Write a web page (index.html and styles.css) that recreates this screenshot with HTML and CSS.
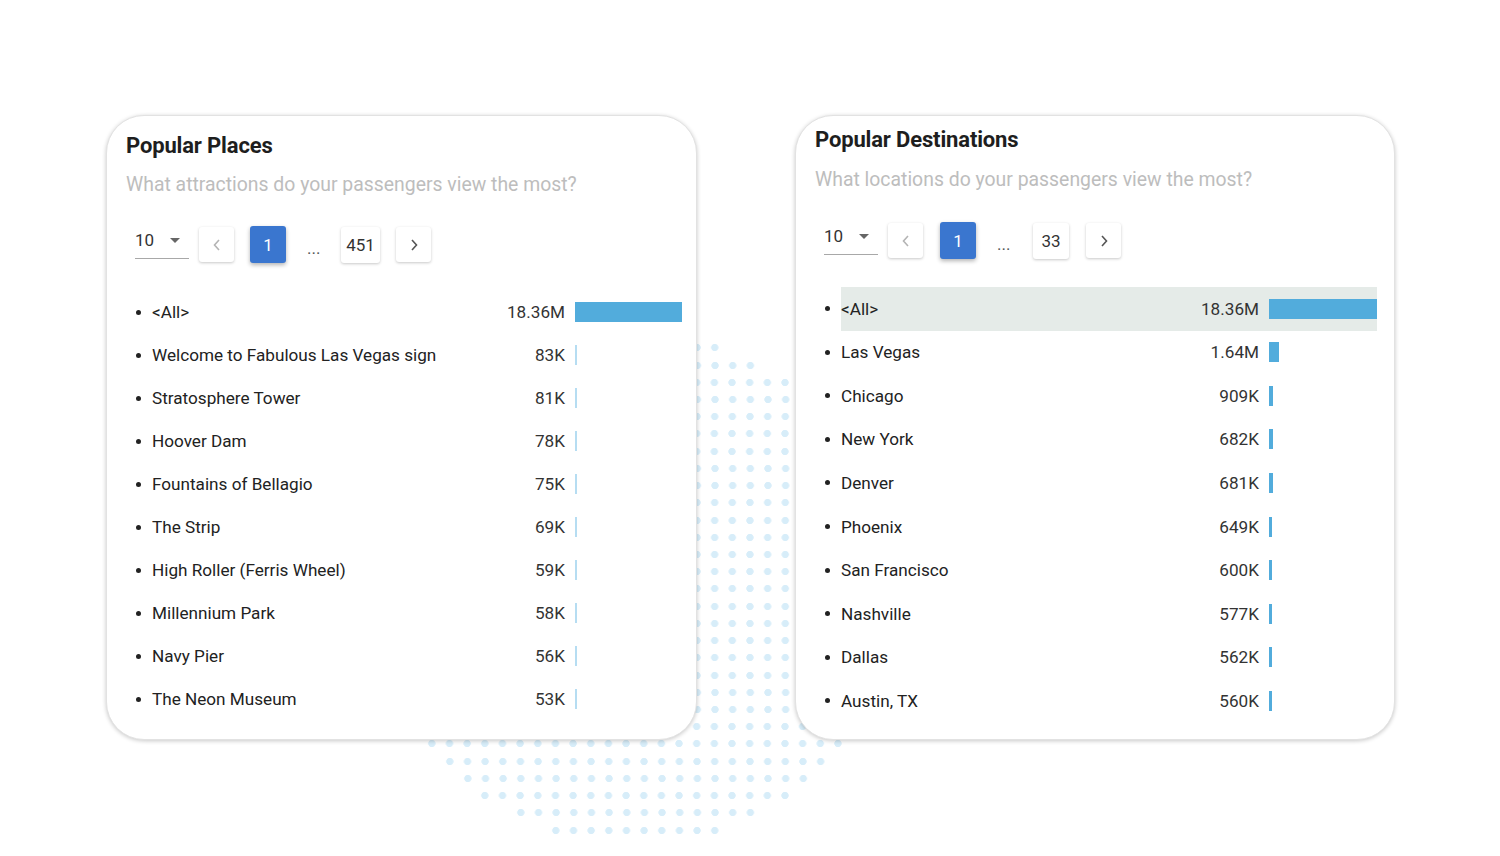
FILE: index.html
```html
<!DOCTYPE html>
<html>
<head>
<meta charset="utf-8">
<link rel="stylesheet" href="styles.css">
</head>
<body>
<div class="dots" aria-hidden="true">
  <div class="dr w10"></div><div class="dr w14"></div><div class="dr w18"></div><div class="dr w20"></div>
  <div class="dr w22"></div><div class="dr w24"></div><div class="dr w24"></div><div class="dr w26"></div>
  <div class="dr w26"></div><div class="dr w28"></div><div class="dr w28"></div><div class="dr w28"></div>
  <div class="dr w28"></div><div class="dr w28"></div><div class="dr w28"></div><div class="dr w28"></div>
  <div class="dr w28"></div><div class="dr w28"></div><div class="dr w28"></div><div class="dr w28"></div>
  <div class="dr w26"></div><div class="dr w26"></div><div class="dr w24"></div><div class="dr w24"></div>
  <div class="dr w22"></div><div class="dr w20"></div><div class="dr w18"></div><div class="dr w14"></div>
  <div class="dr w10"></div>
</div>

<main class="cards">
  <section class="card card-places">
    <h2 class="title">Popular Places</h2>
    <p class="sub">What attractions do your passengers view the most?</p>
    <div class="pager">
      <div class="select"><span>10</span><svg width="10" height="5" viewBox="0 0 10 5"><polygon points="0,0 10,0 5,5" fill="#666"/></svg></div>
      <button class="pbtn prev"><svg width="10" height="14" viewBox="0 0 10 14"><path d="M7 2 L2.5 7 L7 12" fill="none" stroke="#b4b4b4" stroke-width="1.6"/></svg></button>
      <button class="pbtn active">1</button>
      <span class="ellipsis">...</span>
      <button class="pbtn num">451</button>
      <button class="pbtn next"><svg width="10" height="14" viewBox="0 0 10 14"><path d="M3 2 L7.5 7 L3 12" fill="none" stroke="#555" stroke-width="1.6"/></svg></button>
    </div>
    <ul class="list">
      <li><span class="bullet"></span><div class="body"><span class="name">&lt;All&gt;</span><span class="val">18.36M</span><span class="bar-wrap"><span class="bar" style="width:107px"></span></span></div></li>
      <li><span class="bullet"></span><div class="body"><span class="name">Welcome to Fabulous Las Vegas sign</span><span class="val">83K</span><span class="bar-wrap"><span class="bar thin"></span></span></div></li>
      <li><span class="bullet"></span><div class="body"><span class="name">Stratosphere Tower</span><span class="val">81K</span><span class="bar-wrap"><span class="bar thin"></span></span></div></li>
      <li><span class="bullet"></span><div class="body"><span class="name">Hoover Dam</span><span class="val">78K</span><span class="bar-wrap"><span class="bar thin"></span></span></div></li>
      <li><span class="bullet"></span><div class="body"><span class="name">Fountains of Bellagio</span><span class="val">75K</span><span class="bar-wrap"><span class="bar thin"></span></span></div></li>
      <li><span class="bullet"></span><div class="body"><span class="name">The Strip</span><span class="val">69K</span><span class="bar-wrap"><span class="bar thin"></span></span></div></li>
      <li><span class="bullet"></span><div class="body"><span class="name">High Roller (Ferris Wheel)</span><span class="val">59K</span><span class="bar-wrap"><span class="bar thin"></span></span></div></li>
      <li><span class="bullet"></span><div class="body"><span class="name">Millennium Park</span><span class="val">58K</span><span class="bar-wrap"><span class="bar thin"></span></span></div></li>
      <li><span class="bullet"></span><div class="body"><span class="name">Navy Pier</span><span class="val">56K</span><span class="bar-wrap"><span class="bar thin"></span></span></div></li>
      <li><span class="bullet"></span><div class="body"><span class="name">The Neon Museum</span><span class="val">53K</span><span class="bar-wrap"><span class="bar thin"></span></span></div></li>
    </ul>
  </section>

  <section class="card card-dest">
    <h2 class="title">Popular Destinations</h2>
    <p class="sub">What locations do your passengers view the most?</p>
    <div class="pager">
      <div class="select"><span>10</span><svg width="10" height="5" viewBox="0 0 10 5"><polygon points="0,0 10,0 5,5" fill="#666"/></svg></div>
      <button class="pbtn prev"><svg width="10" height="14" viewBox="0 0 10 14"><path d="M7 2 L2.5 7 L7 12" fill="none" stroke="#b4b4b4" stroke-width="1.6"/></svg></button>
      <button class="pbtn active">1</button>
      <span class="ellipsis">...</span>
      <button class="pbtn num">33</button>
      <button class="pbtn next"><svg width="10" height="14" viewBox="0 0 10 14"><path d="M3 2 L7.5 7 L3 12" fill="none" stroke="#555" stroke-width="1.6"/></svg></button>
    </div>
    <ul class="list">
      <li><span class="bullet"></span><div class="body selected"><span class="name">&lt;All&gt;</span><span class="val">18.36M</span><span class="bar-wrap"><span class="bar" style="width:108px"></span></span></div></li>
      <li><span class="bullet"></span><div class="body"><span class="name">Las Vegas</span><span class="val">1.64M</span><span class="bar-wrap"><span class="bar" style="width:9.6px"></span></span></div></li>
      <li><span class="bullet"></span><div class="body"><span class="name">Chicago</span><span class="val">909K</span><span class="bar-wrap"><span class="bar" style="width:4.4px"></span></span></div></li>
      <li><span class="bullet"></span><div class="body"><span class="name">New York</span><span class="val">682K</span><span class="bar-wrap"><span class="bar" style="width:3.6px"></span></span></div></li>
      <li><span class="bullet"></span><div class="body"><span class="name">Denver</span><span class="val">681K</span><span class="bar-wrap"><span class="bar" style="width:3.6px"></span></span></div></li>
      <li><span class="bullet"></span><div class="body"><span class="name">Phoenix</span><span class="val">649K</span><span class="bar-wrap"><span class="bar" style="width:3.4px"></span></span></div></li>
      <li><span class="bullet"></span><div class="body"><span class="name">San Francisco</span><span class="val">600K</span><span class="bar-wrap"><span class="bar" style="width:3.3px"></span></span></div></li>
      <li><span class="bullet"></span><div class="body"><span class="name">Nashville</span><span class="val">577K</span><span class="bar-wrap"><span class="bar" style="width:3.2px"></span></span></div></li>
      <li><span class="bullet"></span><div class="body"><span class="name">Dallas</span><span class="val">562K</span><span class="bar-wrap"><span class="bar" style="width:3.1px"></span></span></div></li>
      <li><span class="bullet"></span><div class="body"><span class="name">Austin, TX</span><span class="val">560K</span><span class="bar-wrap"><span class="bar" style="width:3.1px"></span></span></div></li>
    </ul>
  </section>
</main>
</body>
</html>
```
FILE: styles.css
```css
* { box-sizing: border-box; }
html, body { margin: 0; padding: 0; }
body {
  width: 1500px;
  height: 856px;
  background: #ffffff;
  font-family: Roboto, "Liberation Sans", Arial, sans-serif;
  color: #222;
  position: relative;
  overflow: hidden;
}

/* decorative dot field behind the cards */
.dots {
  position: absolute;
  left: 388.12px;
  top: 339.39px;
  width: 494.76px;
  display: flex;
  flex-direction: column;
  align-items: center;
  z-index: 0;
}
.dr {
  height: 17.22px;
  background-image: radial-gradient(circle at center, #d7edf9 0, #d7edf9 3.3px, rgba(215,237,249,0) 4px);
  background-size: 17.67px 17.22px;
  background-repeat: repeat-x;
}
.w10 { width: 176.7px; }
.w14 { width: 247.38px; }
.w18 { width: 318.06px; }
.w20 { width: 353.4px; }
.w22 { width: 388.74px; }
.w24 { width: 424.08px; }
.w26 { width: 459.42px; }
.w28 { width: 494.76px; }

.cards {
  display: flex;
  gap: 98px;
  padding: 115px 0 0 106px;
}

.card {
  position: relative;
  z-index: 1;
  background: #fff;
  height: 625px;
  border-radius: 38px;
  border: 1px solid #e2e2e2;
  box-shadow: 0 1px 4px rgba(0, 0, 0, 0.22);
}
.card-places { width: 591px; padding: 16px 14px 0 19px; }
.card-dest { width: 600px; padding: 10px 17px 0 19px; }

.title {
  margin: 0;
  font-size: 22px;
  line-height: 28px;
  font-weight: 700;
  color: #1e1e1e;
  letter-spacing: -0.15px;
}
.sub {
  margin: 13px 0 0;
  font-size: 19.4px;
  line-height: 24px;
  color: #bdbdbd;
  font-weight: 400;
}
.card-dest .sub { margin-top: 14px; }

.pager {
  display: flex;
  align-items: center;
  height: 37px;
  margin: 29px 0 0 9px;
}
.card-dest .pager { margin-top: 30px; }

.select {
  width: 54px;
  height: 33px;
  border-bottom: 1px solid #a8a8a8;
  display: flex;
  align-items: center;
  justify-content: space-between;
  padding: 0 9px 4px 0;
  font-size: 17px;
  color: #333;
  margin-right: 10px;
  align-self: flex-start;
}
.select svg { margin-top: 1px; }

.pbtn {
  font-family: inherit;
  border: none;
  background: #fff;
  height: 35px;
  min-width: 35px;
  padding: 0 5px;
  border-radius: 3px;
  box-shadow: 0 1px 3px rgba(0, 0, 0, 0.22);
  font-size: 17px;
  color: #333;
  display: flex;
  align-items: center;
  justify-content: center;
}
.pbtn.prev { margin-right: 16px; }
.card-dest .pbtn.prev { margin-right: 17px; }
.pbtn.active {
  width: 36px;
  height: 37px;
  background: #3a76cf;
  color: #fff;
  box-shadow: 0 2px 4px rgba(0, 0, 0, 0.3);
}
.pbtn.num { min-width: 39px; height: 36px; margin-right: 16px; }
.card-dest .pbtn.num { min-width: 36px; margin-right: 17px; }
.ellipsis {
  width: 13px;
  margin: 8px 21px 0;
  font-size: 17px;
  line-height: 17px;
  color: #555;
}
.card-dest .ellipsis { margin-right: 23px; }

.list {
  list-style: none;
  margin: 27.5px 0 0 10px;
  padding: 0;
}
.card-dest .list { margin-top: 28px; }
.list li {
  display: flex;
  align-items: center;
  height: 43px;
}
.card-dest .list li { height: 43.56px; }
.bullet {
  width: 5px;
  height: 5px;
  border-radius: 50%;
  background: #222;
  margin-right: 11px;
  flex: none;
}
.body {
  flex: 1;
  height: 100%;
  display: flex;
  align-items: center;
  font-size: 17.15px;
}
.body.selected { background: #e5ebe8; }
.name { flex: 1; color: #222; white-space: nowrap; }
.val { color: #333; margin-right: 10px; }
.bar-wrap { width: 107px; height: 20px; display: flex; }
.card-dest .bar-wrap { width: 108px; }
.bar { height: 20px; background: #52acdc; display: block; }
.bar.thin { width: 2px; background: #b6ddf2; }
```
